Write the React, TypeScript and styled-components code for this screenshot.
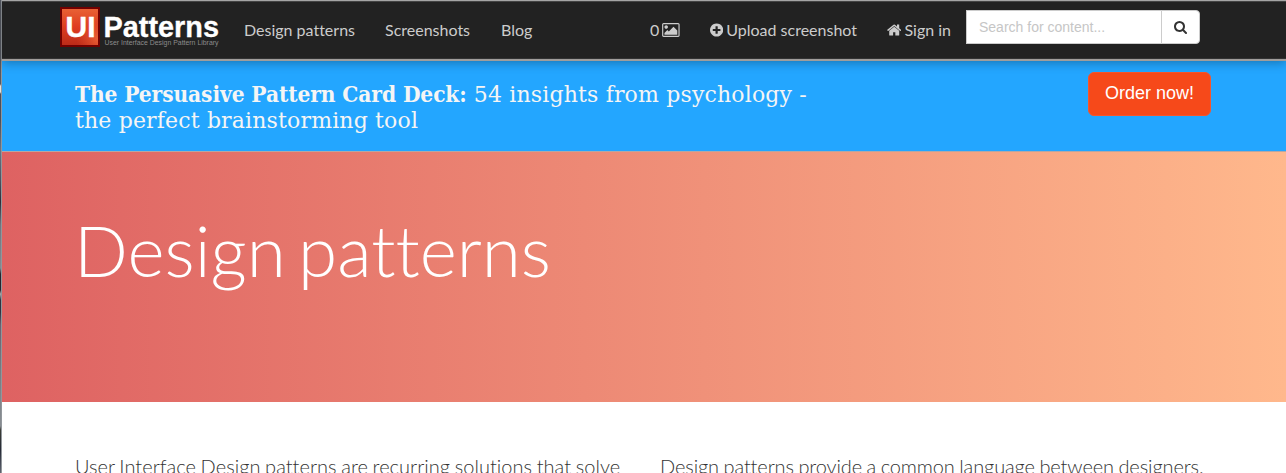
import React from "react";
import styled, { createGlobalStyle } from "styled-components";

const GlobalStyle = createGlobalStyle`
  * { box-sizing: border-box; }
  html, body { margin: 0; padding: 0; background: #fff; overflow: hidden; }
  body { font-family: Lato, sans-serif; font-variant-ligatures: none; }
`;

const Frame = styled.div`
  display: flex;
  height: 473px;
  overflow: hidden;
`;

const WindowEdge = styled.div`
  flex: 0 0 2px;
  border-right: 1px solid #92979c;
  background: linear-gradient(#555962 0 84px, #e6e3dc 86px 92px, #4b4f5b 94px 120px, #687586 150px, #4e5260 180px, #2e2c38 202px, #717580 225px, #858990 268px, #25242e 274px 290px, #aaa 294px, #303240 300px 312px, #6b6070 325px, #777c82 370px, #888d92 426px, #3c3d36 430px, #252936 450px, #606570 473px);
`;

const Page = styled.main`
  flex: 1;
  display: flex;
  flex-direction: column;
  min-width: 0;
`;

const Navbar = styled.header`
  flex: 0 0 61px;
  display: flex;
  background: #222;
  border-top: 1px solid #a5a5a5;
  border-bottom: 2px solid #a09d9b;
  box-shadow: inset 0 1px 0 #444, inset 0 -1px 0 #333, 0 2px 10px rgba(0, 0, 0, 0.3);
  z-index: 1;
`;

const Brand = styled.a`
  display: flex;
  margin: 6px 0 0 58px;
  width: 160px;
  height: 42px;
`;

const NavGroup = styled.nav<{ $left: number }>`
  display: flex;
  gap: 30px;
  height: 58px;
  align-items: center;
  margin-left: ${(p) => p.$left}px;
`;

const NavLink = styled.a<{ $width: number }>`
  display: flex;
  align-items: center;
  gap: 3px;
  width: ${(p) => p.$width}px;
  color: #ccc;
  font-size: 16px;
  line-height: 20px;
  white-space: nowrap;
`;

const SearchForm = styled.form`
  display: flex;
  width: 234px;
  height: 34px;
  margin: 9px 0 0 15px;
`;

const SearchInput = styled.input`
  width: 196px;
  height: 34px;
  padding: 6px 12px;
  border: 1px solid #ccc;
  border-radius: 0;
  background: #fff;
  font: 14px/20px "Liberation Sans", sans-serif;
  &::placeholder { color: #c6c6c6; opacity: 1; }
`;

const SearchButton = styled.button`
  display: flex;
  align-items: center;
  justify-content: center;
  width: 39px;
  height: 34px;
  margin-left: -1px;
  padding: 0;
  border: 1px solid #ccc;
  border-radius: 0 4px 4px 0;
  background: #fff;
  color: #333;
`;

const Promo = styled.section`
  flex: 0 0 91px;
  display: flex;
  justify-content: space-between;
  padding: 11px 75px 0 73px;
  background: #23a6ff;
  border-bottom: 1px solid #b7a7a3;
`;

const PromoText = styled.h2`
  display: flex;
  flex-direction: column;
  margin: 9px 0 0;
  color: #f5f5f5;
  font: 400 22px/26px "Roboto Slab", "DejaVu Serif", serif;
  letter-spacing: 0.16px;
  white-space: pre;
`;

const PromoName = styled.strong`
  font-family: "Roboto Slab", "DejaVu Serif Condensed", "DejaVu Serif", serif;
  font-size: 22.5px;
  letter-spacing: -0.1px;
`;

const OrderButton = styled.button`
  width: 123px;
  height: 44px;
  padding: 0 0 2px;
  border: 1px solid #f9552a;
  border-radius: 6px;
  background: #f6491a;
  color: #fff;
  font: 18px/24px "Liberation Sans", sans-serif;
`;

const Hero = styled.section`
  flex: 0 0 250px;
  padding: 53px 73px 0 72px;
  background: linear-gradient(90deg, #de6262, #ffb88c);
`;

const Title = styled.h1`
  margin: 0;
  color: #fff;
  font-size: 71px;
  font-weight: 300;
  line-height: 90px;
  word-spacing: -7px;
`;

const Columns = styled.section`
  display: grid;
  grid-template-columns: 585px 1fr;
  padding: 50px 0 0 73px;
  background: #fff;
`;

const Paragraph = styled.p<{ $spacing: number }>`
  margin: 0;
  color: #333;
  font-size: 20px;
  font-weight: 300;
  line-height: 28px;
  letter-spacing: ${(p) => p.$spacing}px;
  word-spacing: -0.8px;
  white-space: nowrap;
`;

const paths = {
  picture:
    "M576 576q0 80-56 136t-136 56-136-56-56-136 56-136 136-56 136 56 56 136zm1024 384v448h-1408v-192l320-320 160 160 512-512zm96-704h-1600q-13 0-22.5 9.5t-9.5 22.5v1216q0 13 9.5 22.5t22.5 9.5h1600q13 0 22.5-9.5t9.5-22.5v-1216q0-13-9.5-22.5t-22.5-9.5zm160 32v1216q0 66-47 113t-113 47h-1600q-66 0-113-47t-47-113v-1216q0-66 47-113t113-47h1600q66 0 113 47t47 113z",
  plus:
    "M1344 960v-128q0-26-19-45t-45-19h-256v-256q0-26-19-45t-45-19h-128q-26 0-45 19t-19 45v256h-256q-26 0-45 19t-19 45v128q0 26 19 45t45 19h256v256q0 26 19 45t45 19h128q26 0 45-19t19-45v-256h256q26 0 45-19t19-45zm320-64q0 209-103 385.5t-279.5 279.5-385.5 103-385.5-103-279.5-279.5-103-385.5 103-385.5 279.5-279.5 385.5-103 385.5 103 279.5 279.5 103 385.5z",
  home:
    "M1472 992v480q0 26-19 45t-45 19h-384v-384h-256v384h-384q-26 0-45-19t-19-45v-480q0-1 .5-3t.5-3l575-474 575 474q1 2 1 6zm223-69l-62 74q-8 9-21 11h-3q-13 0-21-7l-692-577-692 577q-12 8-24 7-13-2-21-11l-62-74q-8-10-7-23.5t11-21.5l719-599q32-26 76-26t76 26l244 204v-195q0-14 9-23t23-9h192q14 0 23 9t9 23v408l219 182q10 8 11 21.5t-7 23.5z",
  search:
    "M1216 832q0-185-131.5-316.5t-316.5-131.5-316.5 131.5-131.5 316.5 131.5 316.5 316.5 131.5 316.5-131.5 131.5-316.5zm512 832q0 52-38 90t-90 38q-54 0-90-38l-343-342q-179 124-399 124-143 0-273.5-55.5t-225-150-150-225-55.5-273.5 55.5-273.5 150-225 225-150 273.5-55.5 273.5 55.5 225 150 150 225 55.5 273.5q0 220-124 399l343 343q37 37 37 90z",
};

function Icon({ name, box, width, height }: { name: keyof typeof paths; box: string; width: number; height: number }) {
  return (
    <svg width={width} height={height} viewBox={box} fill="currentColor" aria-hidden="true">
      <path d={paths[name]} />
    </svg>
  );
}

function Logo() {
  return (
    <svg width="160" height="42" viewBox="0 0 160 42" fontFamily="Liberation Sans, sans-serif">
      <defs>
        <linearGradient id="tile" x1="0" y1="0" x2="0" y2="1">
          <stop offset="0" stopColor="#e96336" />
          <stop offset="0.5" stopColor="#df3c20" />
          <stop offset="1" stopColor="#b92a18" />
        </linearGradient>
        <radialGradient id="glow" cx="1" cy="0.8" r="0.6">
          <stop offset="0" stopColor="#ec6238" />
          <stop offset="1" stopColor="#e04a28" stopOpacity="0" />
        </radialGradient>
      </defs>
      <rect x="1" y="1" width="38" height="38" fill="url(#tile)" />
      <rect x="1" y="1" width="38" height="38" fill="url(#glow)" stroke="#710000" strokeWidth="2" />
      <text x="5.5" y="30" fontSize="30" fontWeight="700" fill="#fff" stroke="#fff" strokeWidth="0.4" textLength="30" lengthAdjust="spacingAndGlyphs">UI</text>
      <text x="43.5" y="29.5" fontSize="29.5" fontWeight="700" fill="#fff" stroke="#fff" strokeWidth="0.3" textLength="115.5" lengthAdjust="spacingAndGlyphs">Patterns</text>
      <text x="44.5" y="38" fontSize="7" fill="#8c8c8c" textLength="114" lengthAdjust="spacingAndGlyphs">User Interface Design Pattern Library</text>
    </svg>
  );
}

export default function App() {
  return (
    <>
      <GlobalStyle />
      <Frame>
        <WindowEdge />
        <Page>
          <Navbar>
            <Brand><Logo /></Brand>
            <NavGroup $left={24}>
              <NavLink $width={111}>Design patterns</NavLink>
              <NavLink $width={86}>Screenshots</NavLink>
              <NavLink $width={32}>Blog</NavLink>
            </NavGroup>
            <NavGroup $left={117}>
              <NavLink $width={30}>
                0 <Icon name="picture" box="-64 128 1920 1536" width={18} height={14} />
              </NavLink>
              <NavLink $width={147}>
                <Icon name="plus" box="128 128 1536 1536" width={14} height={14} /> Upload screenshot
              </NavLink>
              <NavLink $width={64}>
                <Icon name="home" box="64 128 1664 1536" width={15} height={14} /> Sign in
              </NavLink>
            </NavGroup>
            <SearchForm>
              <SearchInput placeholder="Search for content..." />
              <SearchButton type="button" aria-label="Search">
                <Icon name="search" box="64 128 1664 1664" width={13} height={13} />
              </SearchButton>
            </SearchForm>
          </Navbar>
          <Promo>
            <PromoText>
              <span><PromoName>The Persuasive Pattern Card Deck:</PromoName> 54 insights from psychology -</span>
              <span>the perfect brainstorming tool</span>
            </PromoText>
            <OrderButton>Order now!</OrderButton>
          </Promo>
          <Hero>
            <Title>Design patterns</Title>
          </Hero>
          <Columns>
            <Paragraph $spacing={0.03}>User Interface Design patterns are recurring solutions that solve</Paragraph>
            <Paragraph $spacing={-0.11}>Design patterns provide a common language between designers.</Paragraph>
          </Columns>
        </Page>
      </Frame>
    </>
  );
}
